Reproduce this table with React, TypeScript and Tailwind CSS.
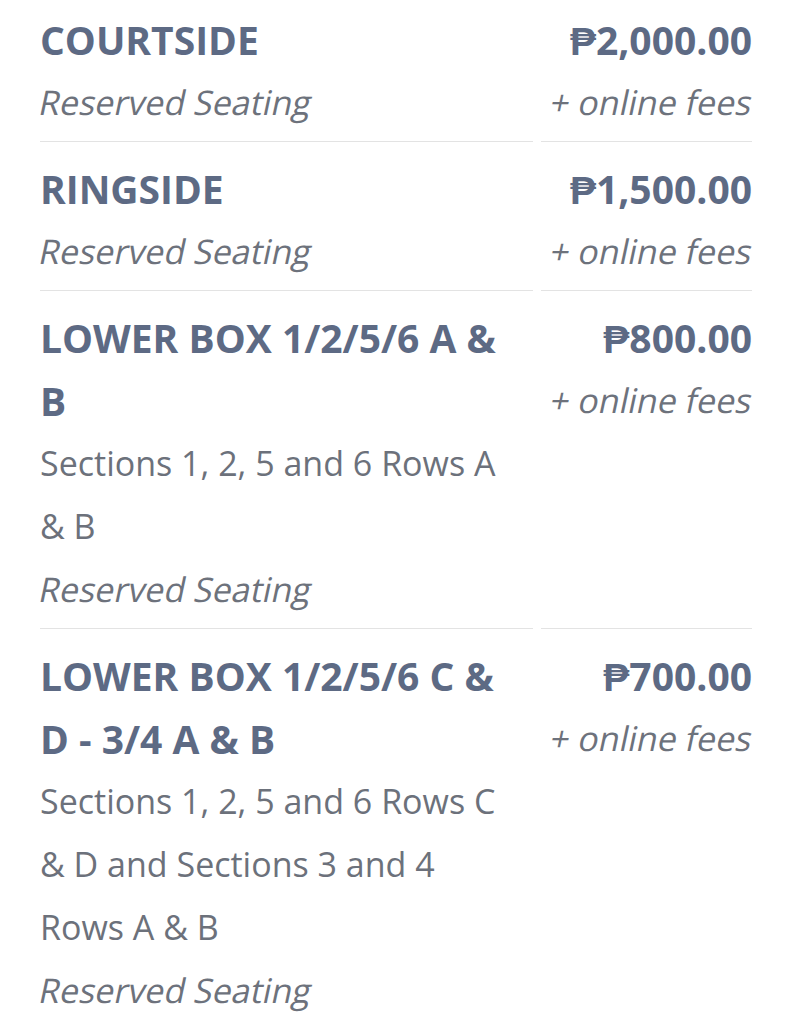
const tickets = [
  {
    name: 'COURTSIDE',
    details: [],
    price: '₱2,000.00',
  },
  {
    name: 'RINGSIDE',
    details: [],
    price: '₱1,500.00',
  },
  {
    name: 'LOWER BOX 1/2/5/6 A & B',
    details: ['Sections 1, 2, 5 and 6 Rows A & B'],
    price: '₱800.00',
  },
  {
    name: 'LOWER BOX 1/2/5/6 C & D - 3/4 A & B',
    details: ['Sections 1, 2, 5 and 6 Rows C & D and Sections 3 and 4 Rows A & B'],
    price: '₱700.00',
  },
]

// the source renders its italics as slanted regular, so skew instead of font-style
function Slanted({ children }: { children: React.ReactNode }) {
  return <span className="inline-block -skew-x-12 text-[#6d727c]">{children}</span>
}

export default function App() {
  return (
    <div className="min-h-screen bg-white pl-[40px] font-['Open_Sans',sans-serif] text-[34px] leading-[63px]">
      {tickets.map((t, i) => {
        const last = i === tickets.length - 1
        const cell = `${i === 0 ? 'pt-[8px]' : 'pt-[15px]'} pb-[7px] ${last ? '' : 'border-b border-[#e3e3e3]'}`
        return (
          <div key={t.name} className="grid grid-cols-[493px_211px] gap-x-[8px]">
            <div className={`${cell} pr-[24px]`}>
              <div className="font-bold text-[39px] text-[#5d6a84]">{t.name}</div>
              {t.details.map((d) => (
                <div key={d} className="text-[#6c717b]">{d}</div>
              ))}
              <div>
                <Slanted>Reserved Seating</Slanted>
              </div>
            </div>
            <div className={`${cell} text-right`}>
              <div className="font-bold text-[39px] text-[#5d6a84]">{t.price}</div>
              <div>
                <Slanted>+ online fees</Slanted>
              </div>
            </div>
          </div>
        )
      })}
    </div>
  )
}
